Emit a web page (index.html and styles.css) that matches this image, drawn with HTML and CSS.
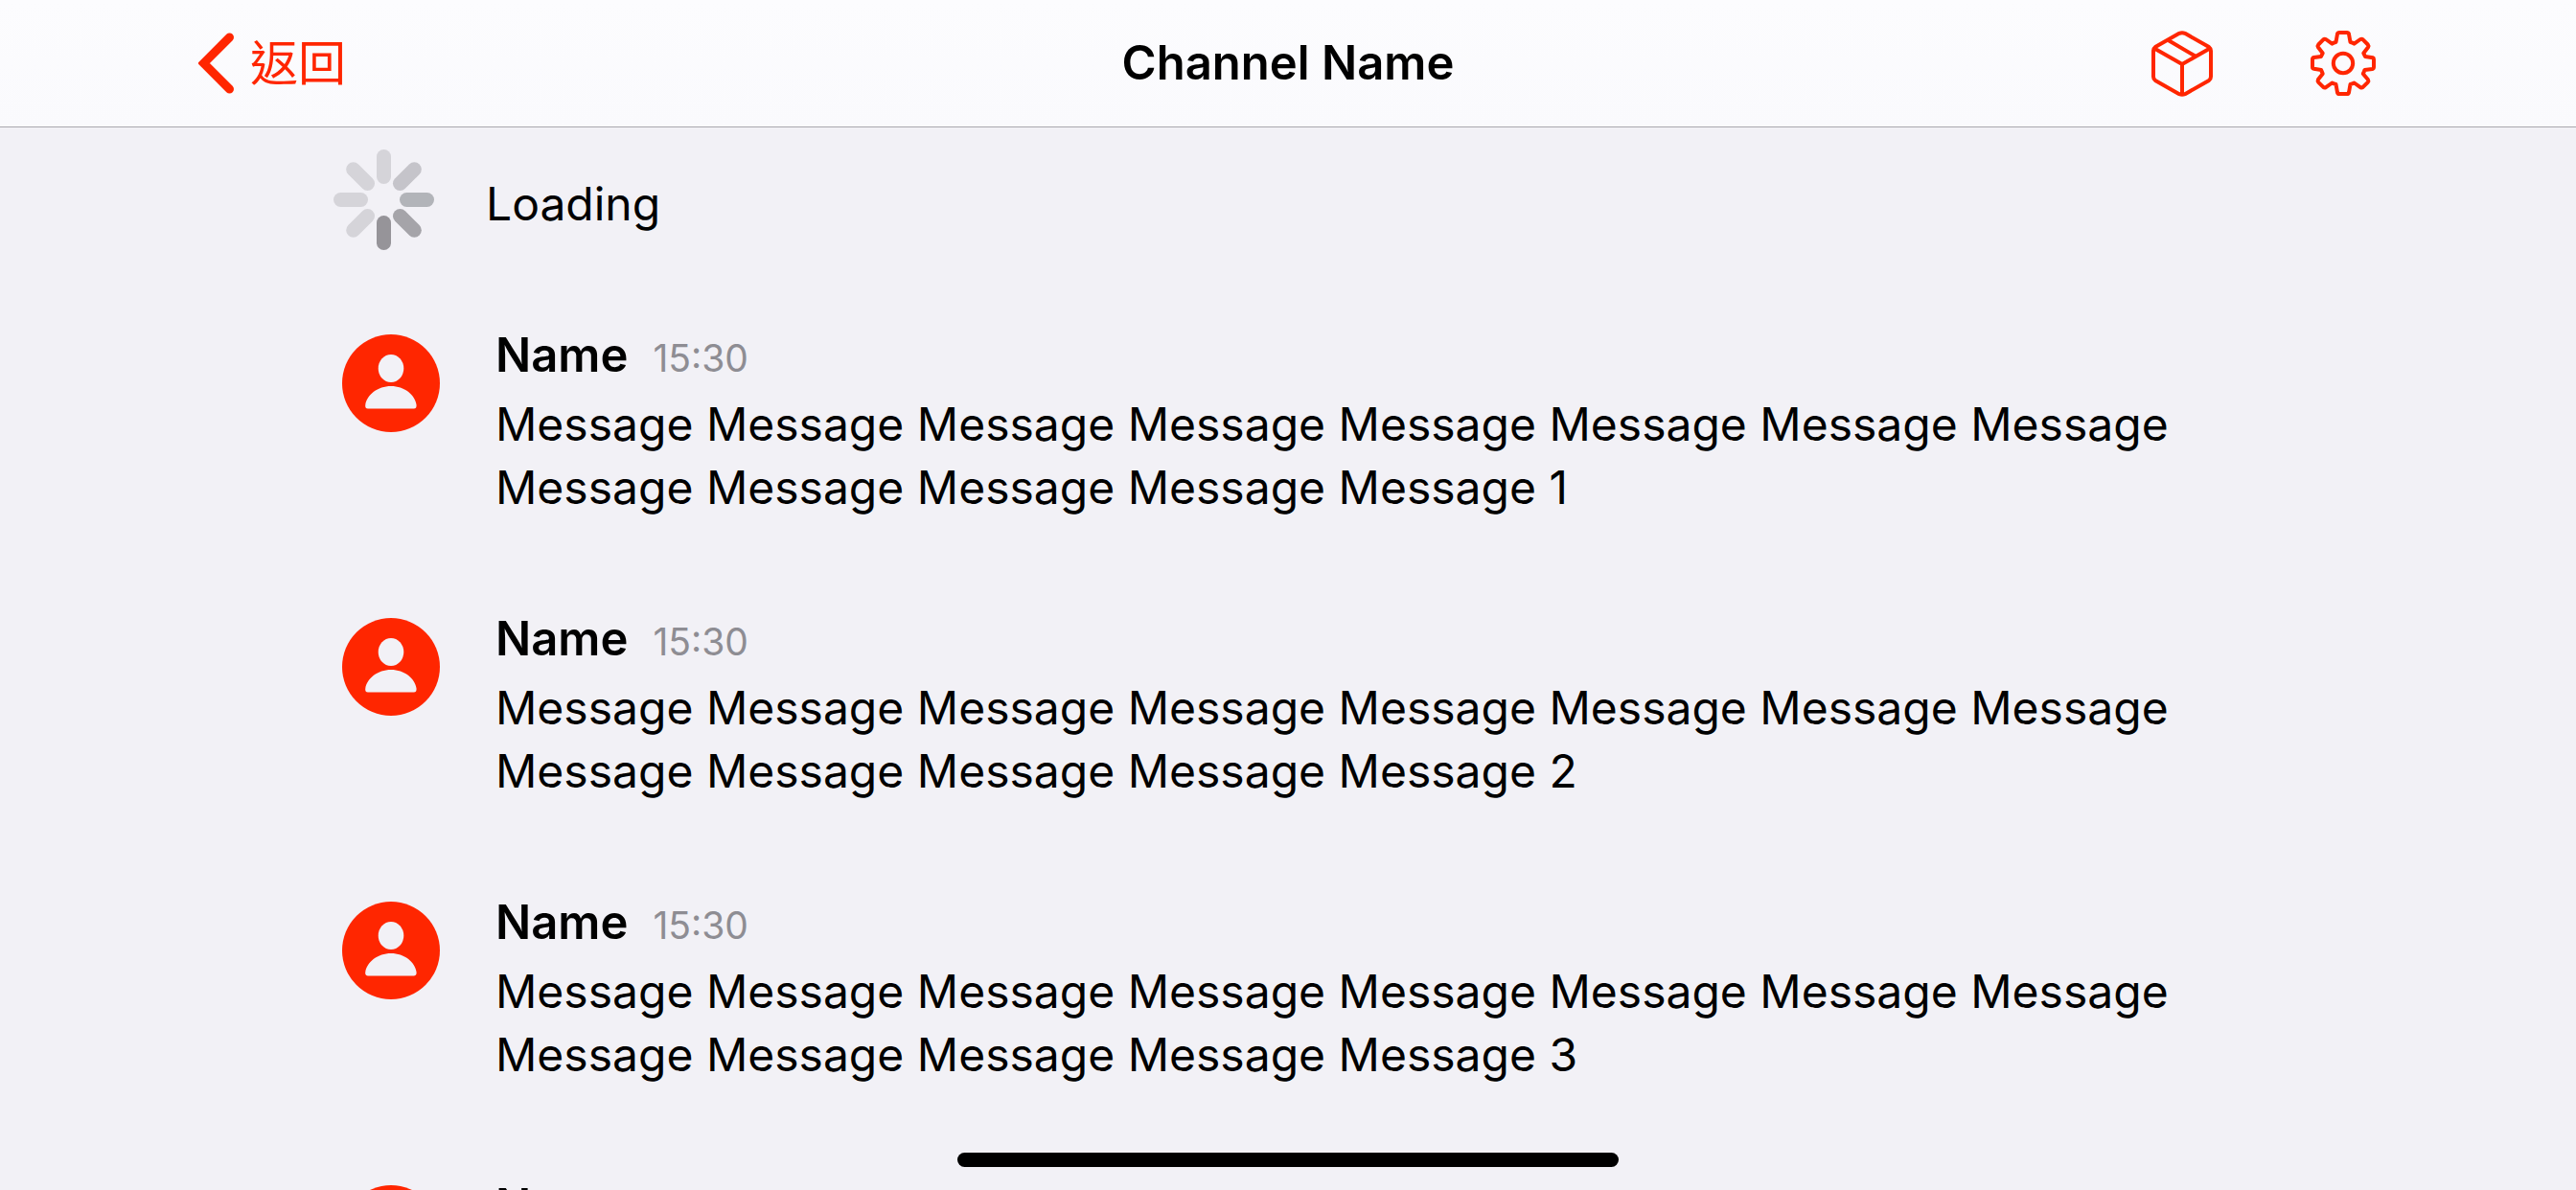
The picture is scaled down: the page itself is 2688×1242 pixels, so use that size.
FILE: index.html
```html
<!DOCTYPE html>
<html lang="zh-Hant">
<head>
<meta charset="utf-8">
<meta name="viewport" content="width=device-width, initial-scale=1">
<title>Channel Name</title>
<link rel="stylesheet" href="styles.css">
</head>
<body>
<svg width="0" height="0" class="sprite" aria-hidden="true">
  <symbol id="avatar" viewBox="0 0 102 102">
    <circle cx="51" cy="51" r="51" fill="#ff2600"/>
    <ellipse cx="51" cy="35.500" rx="13.300" ry="14.500" fill="#f2f1f6"/>
    <path d="M27 77.500c-2.300 0-3.200-1.500-2.700-4.300C26 63 37 54 51 54s25 9 26.500 19.200c.4 2.800-.5 4.300-2.700 4.300z" fill="#f2f1f6"/>
  </symbol>
</svg>
<header class="navbar">
  <a class="back" href="#">
    <svg width="38" height="64" viewBox="0 0 38 64" aria-hidden="true"><path d="M32.500 5 5.500 32l27 27" fill="none" stroke="currentColor" stroke-width="9" stroke-linecap="round"/></svg>
    <span>返回</span>
  </a>
  <h1 class="title">Channel Name</h1>
  <div class="actions">
    <button class="icon-button" type="button" aria-label="Package">
      <svg width="72" height="72" viewBox="0 0 72 72" fill="none" stroke="currentColor" stroke-width="4" stroke-linejoin="round" aria-hidden="true">
        <path d="M39 4.800 64 19Q66 20.500 66 23V50Q66 52.500 64 54L39 68.200Q36 69.500 33 68.200L8 54Q6 52.500 6 50V23Q6 20.500 8 19L33 4.800Q36 3.500 39 4.800Z"/>
        <path d="M7 20.500 36 37l29-16.500M36 37v32M21.500 12 50.500 29"/>
      </svg>
    </button>
    <button class="icon-button" type="button" aria-label="Settings">
      <svg width="72" height="72" viewBox="0 0 72 72" fill="none" stroke="currentColor" stroke-width="4" stroke-linejoin="round" aria-hidden="true">
        <circle cx="36" cy="36" r="10.200"/>
        <path d="M32 4h8q1.500 0 2 1.500L43.500 14q2.500.5 4 1.700L54 11q1.500-.6 2.700.4l5.100 5.100q1 1.200.3 2.700L57.300 25.500q.8 1.500 1.700 3.500l8 1.200q1 .3 1 1.800v8q0 1.500-1.500 2L58.500 43q-.7 2-1.700 4l5.100 6q.9 1.500-.1 2.800l-5.100 5.100q-1.200 1-2.700.3L47.500 56.500q-2 1-4 1.500L42 66.500q-.5 1.500-2 1.500h-8q-1.500 0-2-1.500L28.500 58q-2-.5-4-1.500L18 61.200q-1.500.7-2.700-.3l-5.100-5.100q-1-1.300-.3-2.800L14.700 47q-.7-2-1.700-4l-7.500-1.200Q4 41.500 4 40v-8q0-1.500 1.500-2L13 29q.9-2 1.700-3.500L9.900 19.200q-.7-1.500.3-2.700l5.100-5.100q1.200-1 2.700-.4l6.500 4.700q1.500-1.200 4-1.700L30 5.500Q30.500 4 32 4Z"/>
      </svg>
    </button>
  </div>
</header>
<main class="feed">
  <div class="loading" role="status">
    <svg class="spinner" width="105" height="105" viewBox="-52.500 -52.500 105 105" stroke-width="15" stroke-linecap="round" aria-hidden="true">
      <path d="M0-24V-45" stroke="#d5d4d9"/>
      <path d="M0-24V-45" stroke="#c5c4ca" transform="rotate(45)"/>
      <path d="M0-24V-45" stroke="#b2b4b9" transform="rotate(90)"/>
      <path d="M0-24V-45" stroke="#a5a4a9" transform="rotate(135)"/>
      <path d="M0-24V-45" stroke="#969499" transform="rotate(180)"/>
      <path d="M0-24V-45" stroke="#d5d4d9" transform="rotate(225)"/>
      <path d="M0-24V-45" stroke="#d5d4d9" transform="rotate(270)"/>
      <path d="M0-24V-45" stroke="#d5d4d9" transform="rotate(315)"/>
    </svg>
    <span>Loading</span>
  </div>
  <article class="message">
    <svg class="avatar" aria-hidden="true"><use href="#avatar"/></svg>
    <div class="content">
      <div class="meta"><h2 class="name">Name</h2><time class="time">15:30</time></div>
      <p class="text">Message Message Message Message Message Message Message Message Message Message Message Message Message 1</p>
    </div>
  </article>
  <article class="message">
    <svg class="avatar" aria-hidden="true"><use href="#avatar"/></svg>
    <div class="content">
      <div class="meta"><h2 class="name">Name</h2><time class="time">15:30</time></div>
      <p class="text">Message Message Message Message Message Message Message Message Message Message Message Message Message 2</p>
    </div>
  </article>
  <article class="message">
    <svg class="avatar" aria-hidden="true"><use href="#avatar"/></svg>
    <div class="content">
      <div class="meta"><h2 class="name">Name</h2><time class="time">15:30</time></div>
      <p class="text">Message Message Message Message Message Message Message Message Message Message Message Message Message 3</p>
    </div>
  </article>
  <article class="message">
    <svg class="avatar" aria-hidden="true"><use href="#avatar"/></svg>
    <div class="content">
      <div class="meta"><h2 class="name">Name</h2></div>
    </div>
  </article>
</main>
<div class="home-indicator"></div>
</body>
</html>
```
FILE: styles.css
```css
* {
  box-sizing: border-box;
}

body {
  display: flex;
  flex-direction: column;
  height: 100vh;
  margin: 0;
  overflow: hidden;
  background: #f2f1f6;
  color: #000;
  font: 400 48px/66px Inter, "Noto Sans CJK TC", sans-serif;
}

.sprite {
  position: absolute;
}

h1,
h2,
p {
  margin: 0;
}

.navbar {
  display: grid;
  grid-template-columns: 1fr auto 1fr;
  align-items: center;
  flex: none;
  padding: 0 207px;
  height: 133px;
  border-bottom: 1px solid #a9a8ae;
  background: linear-gradient(#fcfcfe, #fafafd);
}

.back {
  display: flex;
  align-items: center;
  gap: 16px;
  color: #ff2600;
  font-size: 50px;
  text-decoration: none;
}

.title,
.name {
  font-size: 49px;
  font-weight: 600;
}

.actions {
  display: flex;
  justify-content: flex-end;
  gap: 96px;
}

.icon-button {
  display: block;
  width: 72px;
  height: 72px;
  padding: 0;
  border: 0;
  background: none;
  color: #ff2600;
}

.icon-button svg {
  display: block;
}

.feed {
  display: flex;
  flex: 1;
  flex-direction: column;
  gap: 92px;
  min-height: 0;
  padding: 47px 348px 0;
  overflow: hidden;
}

.loading {
  display: flex;
  flex: none;
  align-items: center;
  gap: 54px;
  height: 66px;
}

.spinner {
  flex: none;
  margin-bottom: 10px;
}

.message {
  display: flex;
  flex: none;
  gap: 58px;
  padding-left: 9px;
}

.avatar {
  flex: none;
  width: 102px;
  height: 102px;
  margin-top: 11px;
}

.content {
  flex: 1;
}

.meta {
  display: flex;
  align-items: baseline;
  gap: 26px;
  margin-bottom: 6px;
}

.time {
  color: #8e8d93;
  font-size: 39px;
  line-height: 48px;
}

.home-indicator {
  position: fixed;
  bottom: 24px;
  left: 50%;
  width: 690px;
  height: 15px;
  margin-left: -345px;
  border-radius: 8px;
  background: #000;
}
```
